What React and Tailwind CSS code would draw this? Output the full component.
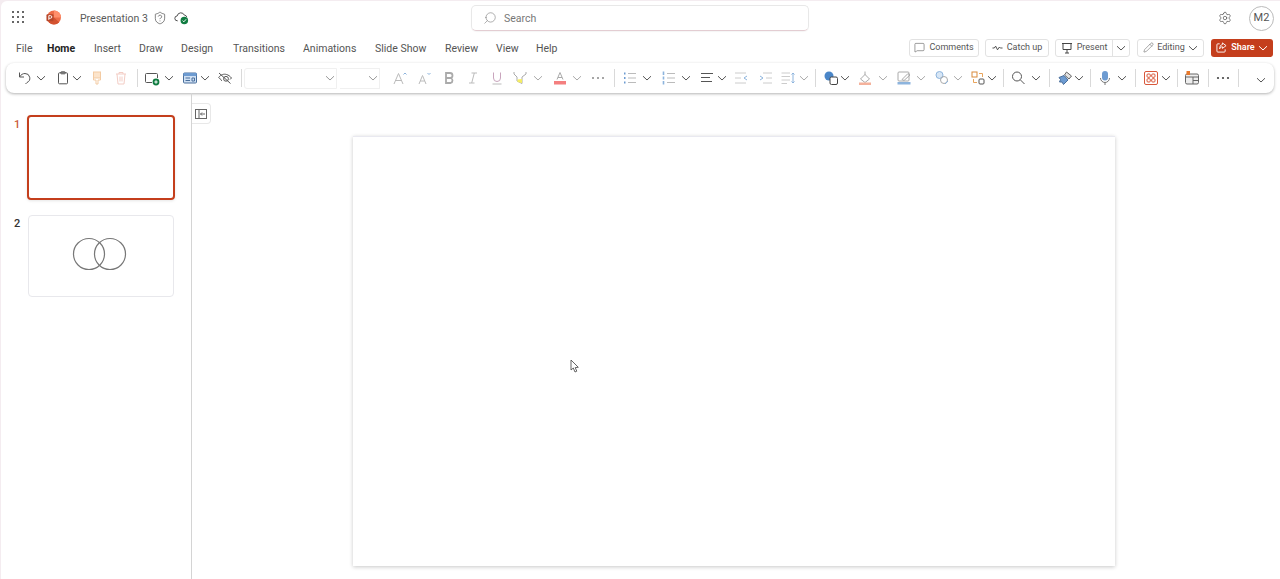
import React from 'react';
import { Settings, Search, MessageSquare, Pencil, ShieldQuestion } from 'lucide-react';

const tabs = [
  { name: 'File', cls: 'w-[31px]' },
  { name: 'Home', cls: 'w-[47px] font-bold text-[#242424]' },
  { name: 'Insert', cls: 'w-[45px]' },
  { name: 'Draw', cls: 'w-[42px]' },
  { name: 'Design', cls: 'w-[52px]' },
  { name: 'Transitions', cls: 'w-[70px]' },
  { name: 'Animations', cls: 'w-[72px]' },
  { name: 'Slide Show', cls: 'w-[70px]' },
  { name: 'Review', cls: 'w-[51px]' },
  { name: 'View', cls: 'w-[40px]' },
  { name: 'Help', cls: 'w-[30px]' },
];

const Chev = ({ className = '', color = 'text-[#555]' }) => (
  <svg viewBox="0 0 10 10" className={`w-[10px] h-[10px] shrink-0 fill-none stroke-current ${color} ${className}`}>
    <path d="M1 3.2 L5 7 L9 3.2" strokeWidth="1" />
  </svg>
);

const Divider = ({ className = '' }) => <div className={`w-px h-[18px] bg-[#d9d9d9] shrink-0 ${className}`} />;

const Ico = ({ className = '', children }) => (
  <svg viewBox="0 0 16 16" className={`w-4 h-4 shrink-0 fill-none stroke-current ${className}`} strokeWidth="1">
    {children}
  </svg>
);

const GridDots = () => (
  <svg viewBox="0 0 12 12" className="w-[12px] h-[12px] fill-[#333]">
    {[1, 6, 11].map((y) =>
      [1, 6, 11].map((x) => <circle key={`${x}-${y}`} cx={x} cy={y} r="1" />)
    )}
  </svg>
);

const Logo = () => (
  <svg viewBox="0 0 16 16" className="w-[15px] h-[15px]">
    <circle cx="8.5" cy="8" r="7.5" fill="#ed6c47" />
    <path d="M8.5 0.5 A7.5 7.5 0 0 1 16 8 L8.5 8 Z" fill="#ff8f6b" />
    <path d="M1 8 A7.5 7.5 0 0 0 8.5 15.5 A7.5 7.5 0 0 0 14 13 L8.5 8 Z" fill="#d35230" />
    <rect x="0.5" y="4.5" width="7.5" height="7.5" rx="1" fill="#b7472a" />
    <path d="M3 10.5 V6 H4.8 A1.4 1.4 0 0 1 4.8 8.8 H3" stroke="#fff" strokeWidth="1" fill="none" />
  </svg>
);

const CloudCheck = () => (
  <svg viewBox="0 0 16 16" className="w-[15px] h-[15px] fill-none">
    <path d="M4 11.5 H3.6 A2.6 2.6 0 0 1 3.4 6.3 A4 4 0 0 1 11 5.4 A2.8 2.8 0 0 1 13.6 7.6" stroke="#444" strokeWidth="1" />
    <circle cx="11" cy="11.2" r="4" fill="#107c41" />
    <path d="M9.2 11.3 L10.5 12.6 L12.9 9.9" stroke="#fff" strokeWidth="1" />
  </svg>
);

const OutlineBtn = ({ className = '', children }) => (
  <div className={`h-[18px] flex items-center justify-center border border-[#e2e2e2] bg-white rounded-[3px] text-[9px] text-[#555] shrink-0 ${className}`}>
    {children}
  </div>
);

function Ribbon() {
  return (
    <div className="ml-[5px] mr-[6px] mt-[3px] h-[30px] flex items-center bg-white rounded-lg shadow-[0_1px_3px_rgba(0,0,0,0.3)]">
      <Ico className="ml-[10px] text-[#555]"><path d="M3.5 2.5 V7 H8 M3.5 7 C5 4.5 7 3.5 9 3.5 A4.7 4.7 0 0 1 11 12.5 L9.5 14" /></Ico>
      <Chev className="ml-[4px]" />
      <Ico className="ml-[9px] text-[#555]"><rect x="3.5" y="2.8" width="9" height="11" rx="1" /><rect x="5.8" y="1.8" width="4.4" height="2" rx="0.6" /></Ico>
      <Chev className="ml-px" />
      <Ico className="ml-[7px] text-[#f3cba3]"><rect x="4.5" y="2" width="7" height="6" fill="#fce4cb" /><path d="M4.5 8 V10 H7 V14 H9 V10 H11.5 V8" /></Ico>
      <Ico className="ml-[8px] text-[#f3cdc5]"><path d="M3 4 H13 M6 4 V2.5 H10 V4 M4 4 L5 14 H11 L12 4 M7 6.5 V11.5 M9 6.5 V11.5" /></Ico>
      <Divider className="ml-[8px]" />
      <Ico className="ml-[6px] text-[#555]"><path d="M8 12.5 H2.5 A1 1 0 0 1 1.5 11.5 V4.5 A1 1 0 0 1 2.5 3.5 H12.5 A1 1 0 0 1 13.5 4.5 V8" /><circle cx="12" cy="12" r="3.4" fill="#107c41" stroke="none" /><path d="M10.3 12 H13.7 M12 10.3 V13.7" stroke="#fff" /></Ico>
      <Chev className="ml-[4px]" />
      <Ico className="ml-[8px] text-[#4a6f9c]"><rect x="1.5" y="3" width="13" height="10" rx="1" fill="#cfe0f3" /><rect x="1.5" y="3" width="13" height="3" fill="#6d9bd1" stroke="none" /><path d="M3.5 8 H8 M3.5 10.5 H8 M10 8 H12.5 V11 H10 Z" /></Ico>
      <Chev className="ml-[2px]" />
      <Ico className="ml-[7px] text-[#555]"><path d="M2 3 L13.5 13.5 M1.5 7.5 C4 4.5 7 3.7 9.5 4.5 C11.5 5 13 6.2 14.5 8 L13 9.5 M2 7.5 C3 9 4 10 5 10.8" /><circle cx="9" cy="8.8" r="2.4" /></Ico>
      <Divider className="ml-[8px]" />
      <div className="ml-[2px] w-[93px] h-[21px] flex items-center justify-end pr-[1px] border border-[#f0f0f0] rounded-l-[3px] shrink-0">
        <Chev color="text-[#999]" />
      </div>
      <div className="ml-[3px] w-[40px] h-[21px] flex items-center justify-end pr-[1px] border-r border-y border-[#f0f0f0] shrink-0">
        <Chev color="text-[#999]" />
      </div>
      <Ico className="ml-[12px] text-[#bbb]"><path d="M2 14 L6.5 3.5 L11 14 M3.6 10.5 H9.4" /><path d="M11.5 4.5 L13 3 L14.5 4.5" stroke="#8db4dd" /></Ico>
      <Ico className="ml-[8px] text-[#bbb]"><path d="M3 14 L6.5 5.5 L10 14 M4.2 11 H8.8" /><path d="M11.5 3 L13 4.5 L14.5 3" stroke="#8db4dd" /></Ico>
      <Ico className="ml-[9px] text-[#aaa]"><path strokeWidth="1.8" d="M5 3 H9 A2.4 2.4 0 0 1 9 8 H5 Z M5 8 H9.6 A2.6 2.6 0 0 1 9.6 13 H5 Z" /></Ico>
      <Ico className="ml-[8px] text-[#bbb]"><path d="M6.5 3 H12 M4 13 H9.5 M9.3 3 L6.7 13" /></Ico>
      <Ico className="ml-[8px] text-[#bbb]"><path d="M4.5 2.5 V8 A3.5 3.5 0 0 0 11.5 8 V2.5" stroke="#c9a5bd" /><path d="M3.5 14 H12.5" /></Ico>
      <Ico className="ml-[7px] text-[#aaa]"><path d="M2 2 V4 L5 7 V11 L10 13.5 V7 L14 4 V2" /><path d="M5.5 9.5 L10 9 V13 L5.5 12 Z" fill="#f5ee63" stroke="none" /></Ico>
      <Chev className="ml-[5px]" color="text-[#aaa]" />
      <Ico className="ml-[9px] text-[#aaa]"><path d="M5 9.5 L8 2.5 L11 9.5 M6 7.5 H10" /><rect x="2" y="11" width="12" height="3.5" fill="#f47f7f" stroke="none" /></Ico>
      <Chev className="ml-[4px]" color="text-[#aaa]" />
      <Ico className="ml-[8px] text-[#888]"><circle cx="3" cy="8" r="1" fill="#888" stroke="none" /><circle cx="8" cy="8" r="1" fill="#888" stroke="none" /><circle cx="13" cy="8" r="1" fill="#888" stroke="none" /></Ico>
      <Divider className="ml-[8px]" />
      <Ico className="ml-[7px] text-[#bbb]"><path d="M6 3.5 H14 M6 8 H14 M6 12.5 H14" /><path d="M2 3.5 H3.5 M2 8 H3.5 M2 12.5 H3.5" stroke="#6d9bd1" strokeWidth="2" /></Ico>
      <Chev className="ml-[4px]" />
      <Ico className="ml-[9px] text-[#bbb]"><path d="M6 3.5 H14 M6 8 H14 M6 12.5 H14" /><path d="M2.5 1.5 V5 M2.5 6.5 V9.5 M2.5 11 V14.5" stroke="#8db4dd" strokeWidth="1.6" /></Ico>
      <Chev className="ml-[4px]" />
      <Ico className="ml-[8px] text-[#555]"><path d="M2 3.5 H14 M2 7.5 H11 M2 11.5 H13" strokeWidth="1.2" /></Ico>
      <Chev className="ml-[2px]" />
      <Ico className="ml-[6px] text-[#ccc]"><path d="M2 3 H13 M2 13 H13 M2 8 H8" /><path d="M14 6 L11 8 L14 10" stroke="#8db4dd" /></Ico>
      <Ico className="ml-[9px] text-[#ccc]"><path d="M5 3 H14 M5 13 H14 M8 8 H14" /><path d="M2 6 L5 8 L2 10" stroke="#8db4dd" /></Ico>
      <Ico className="ml-[6px] text-[#ccc]"><path d="M1.5 3 H10 M1.5 6.5 H10 M1.5 10 H10 M1.5 13.5 H7" /><path d="M13 3 V13 M11.5 4.5 L13 3 L14.5 4.5 M11.5 11.5 L13 13 L14.5 11.5" stroke="#8db4dd" /></Ico>
      <Chev className="ml-[3px]" color="text-[#aaa]" />
      <Divider className="ml-[6px]" />
      <Ico className="ml-[7px] text-[#444]"><circle cx="6" cy="6" r="4.5" fill="#4a86c8" stroke="none" /><rect x="7" y="7" width="7.5" height="7.5" rx="1.5" fill="#fff" /></Ico>
      <Chev className="ml-px" />
      <Ico className="ml-[7px] text-[#aaa]"><path d="M8 1.5 V5 M3.5 9 L8 4.5 L12.5 9 L8 12.5 Z" /><rect x="2" y="12.5" width="12" height="2.5" fill="#f4b29c" stroke="none" /></Ico>
      <Chev className="ml-[5px]" color="text-[#aaa]" />
      <Ico className="ml-[8px] text-[#aaa]"><rect x="2" y="2" width="11" height="9" rx="1" /><path d="M6 9.5 L12 3.5 L14 5 L8 10.5 Z" /><rect x="1.5" y="12" width="13" height="2.5" fill="#8db4dd" stroke="none" /></Ico>
      <Chev className="ml-[4px]" color="text-[#aaa]" />
      <Ico className="ml-[8px] text-[#aaa]"><circle cx="5.5" cy="5" r="3.5" stroke="#8db4dd" fill="#d7e6f5" /><circle cx="10" cy="10" r="3.5" /><path d="M11 14 L14 11" stroke="#8db4dd" /></Ico>
      <Chev className="ml-[3px]" color="text-[#aaa]" />
      <Ico className="ml-[7px] text-[#555]"><rect x="2" y="2" width="5" height="5" stroke="#d98a3a" /><rect x="9" y="9" width="5" height="5" rx="1" /><path d="M9 3.5 H12.5 V7 M7 12.5 H3.5 V9" stroke="#e8a45c" /></Ico>
      <Chev className="ml-px" />
      <Divider className="ml-[6px]" />
      <Ico className="ml-[6px] text-[#555]"><circle cx="7" cy="6.5" r="4.5" /><path d="M10.3 9.8 L14.5 14" /></Ico>
      <Chev className="ml-[5px]" />
      <Divider className="ml-[8px]" />
      <Ico className="ml-[7px] text-[#4a6f9c]"><path d="M9.5 2 L14.5 6 L12 9 L7.5 5 Z" fill="#e4e4e4" stroke="#666" /><path d="M7 5.5 L2 7.5 L3.5 9.5 L2.5 12 L5 12 L6.5 14.5 L11 10 Z" fill="#6d9bd1" /></Ico>
      <Chev className="ml-px" />
      <Divider className="ml-[6px]" />
      <Ico className="ml-[6px] text-[#777]"><rect x="5" y="1" width="6" height="9.5" rx="3" fill="#6d9bd1" stroke="none" /><path d="M3.5 8 A4.5 4.5 0 0 0 12.5 8 M8 12.5 V15" /></Ico>
      <Chev className="ml-[4px]" />
      <Divider className="ml-[8px]" />
      <Ico className="ml-[7px] text-[#d9583b]"><rect x="1.5" y="1.5" width="13" height="13" rx="1.5" /><rect x="4" y="4" width="3.3" height="3.3" rx="1" /><rect x="8.7" y="4" width="3.3" height="3.3" rx="1" /><rect x="4" y="8.7" width="3.3" height="3.3" rx="1" /><rect x="8.7" y="8.7" width="3.3" height="3.3" rx="1" /></Ico>
      <Chev className="ml-[2px]" />
      <Divider className="ml-[6px]" />
      <Ico className="ml-[6px] text-[#666]"><rect x="1.5" y="4" width="13" height="10" rx="1.5" fill="#eee" /><path d="M1.5 7 H14.5 M9 7 V14 M9 10.5 H14.5" /><rect x="2.5" y="1" width="3.5" height="4" fill="#e8792b" stroke="none" /></Ico>
      <Divider className="ml-[8px]" />
      <Ico className="ml-[6px]"><circle cx="3" cy="8" r="1.1" fill="#444" stroke="none" /><circle cx="8" cy="8" r="1.1" fill="#444" stroke="none" /><circle cx="13" cy="8" r="1.1" fill="#444" stroke="none" /></Ico>
      <Divider className="ml-[7px]" />
      <Chev className="ml-[17px] mt-[4px]" />
    </div>
  );
}

export default function App() {
  return (
    <div className="h-screen w-full overflow-hidden bg-[#f4ecf0] pl-px pt-px font-['Roboto',sans-serif] text-[10.5px] text-[#555]">
      <div className="h-full bg-white rounded-tl-md flex flex-col">
        {/* title bar */}
        <div className="h-[34px] flex items-center shrink-0">
          <div className="ml-[11px] -mt-[2px]"><GridDots /></div>
          <div className="ml-[22px] -mt-px"><Logo /></div>
          <span className="ml-[19px] w-[70px] whitespace-nowrap text-[#5b5b5b] mt-px">Presentation 3</span>
          <ShieldQuestion className="ml-[3px] w-[14px] h-[14px] text-[#555] -mt-px" strokeWidth={1.25} />
          <div className="ml-[7px] -mt-px"><CloudCheck /></div>
          <div className="ml-[282px] w-[338px] h-[26px] flex items-center border border-[#e8e8e8] border-b-[#e3cdd2] rounded-[5px] shadow-[0_1px_1px_rgba(0,0,0,0.04)]">
            <Search className="ml-[11px] w-[14px] h-[14px] -scale-x-100 text-[#777]" strokeWidth={1} />
            <span className="ml-[7px] mt-px text-[#777]">Search</span>
          </div>
          <Settings className="ml-auto w-[14px] h-[14px] text-[#555] -mt-px" strokeWidth={1.25} />
          <div className="ml-[17px] mr-[6px] w-[25px] h-[25px] rounded-full border border-[#bbb] flex items-center justify-center text-[11px] text-[#555]">M2</div>
        </div>

        {/* tabs and right-side buttons */}
        <div className="h-[25px] flex items-center shrink-0">
          <div className="ml-[15px] pt-[2px] flex items-center">
            {tabs.map((t) => (
              <span key={t.name} className={`shrink-0 ${t.cls}`}>{t.name}</span>
            ))}
          </div>
          <div className="ml-auto mr-[7px] flex items-center">
            <OutlineBtn className="w-[70px]">
              <MessageSquare className="w-[11px] h-[11px] mr-[4px]" strokeWidth={1.25} />Comments
            </OutlineBtn>
            <OutlineBtn className="ml-[6px] w-[64px]">
              <svg viewBox="0 0 12 8" className="w-[11px] h-[8px] mr-[4px] fill-none stroke-[#444]"><path d="M0.5 4 H2.5 L4 2 L6 6 L8 3 L9 4 H11.5" /></svg>
              Catch up
            </OutlineBtn>
            <div className="ml-[6px] flex h-[18px] border border-[#e2e2e2] rounded-[3px] text-[9px] shrink-0">
              <div className="w-[57px] flex items-center justify-center border-r border-[#e2e2e2]">
                <svg viewBox="0 0 12 12" className="w-[12px] h-[12px] mr-[4px] fill-none stroke-[#444]"><path d="M1 1.5 H11 M2 1.5 V7.5 H10 V1.5 M6 7.5 V11 M4 11 H8" /></svg>
                Present
              </div>
              <div className="w-[16px] flex items-center justify-center"><Chev /></div>
            </div>
            <OutlineBtn className="ml-[7px] w-[67px]">
              <Pencil className="w-[11px] h-[11px] mr-[3px]" strokeWidth={1.1} />Editing
              <Chev className="ml-[3px]" />
            </OutlineBtn>
            <div className="ml-[7px] w-[62px] h-[18px] rounded-[3px] bg-[#c43e1c] text-white text-[9px] font-semibold flex items-center justify-center shrink-0">
              <svg viewBox="0 0 12 12" className="w-[11px] h-[11px] mr-[4px] fill-none stroke-white"><path d="M4 2 H2 A1 1 0 0 0 1 3 V10 A1 1 0 0 0 2 11 H9 A1 1 0 0 0 10 10 V8 M7 1 L11 4 L7 7 V5.2 C5.5 5.2 4.5 6 4 7.5 C4 5 5 3 7 2.8 Z" /></svg>
              Share
              <svg viewBox="0 0 10 10" className="w-[10px] h-[10px] ml-[3px] fill-none stroke-white"><path d="M1 3.2 L5 7 L9 3.2" /></svg>
            </div>
          </div>
        </div>

        <Ribbon />

        {/* body */}
        <div className="flex-1 flex min-h-0">
          <div className="w-[191px] shrink-0 border-r border-[#d4d4d4] relative pt-[22px]">
            <div className="flex">
              <span className="ml-[13px] w-[13px] mt-[2px] text-[#c9593a] font-medium text-[11px]">1</span>
              <div className="w-[148px] h-[85px] border-2 border-[#c43e1c] rounded-[4px] shadow-[0_1px_3px_rgba(0,0,0,0.1)]" />
            </div>
            <div className="flex mt-[15px]">
              <span className="ml-[13px] w-[14px] mt-px text-[#333] font-medium text-[11px]">2</span>
              <div className="w-[146px] h-[82px] border border-[#e8e8ec] rounded-[4px] flex items-center justify-center">
                <svg viewBox="0 0 56 34" className="w-[56px] h-[34px] mr-[4px] mb-[5px] fill-none stroke-[#777]">
                  <circle cx="18" cy="17" r="15.5" strokeWidth="1.2" />
                  <circle cx="39" cy="17" r="15.5" strokeWidth="1.2" />
                </svg>
              </div>
            </div>
            <div className="absolute top-[10px] -right-[20px] w-[19px] h-[21px] bg-white border-y border-r border-[#e8e8e8] rounded-r-[4px] flex items-center justify-center">
              <svg viewBox="0 0 12 10" className="w-[12px] h-[10px] fill-none stroke-[#666]"><rect x="0.5" y="0.5" width="11" height="9" /><path d="M4 0.5 V9.5 M10 5 H5.5 M7 3.5 L5.5 5 L7 6.5" /></svg>
            </div>
          </div>
          <div className="flex-1 pl-[161px] pt-[43px]">
            <div className="w-[762px] h-[430px] bg-white border-t border-[#e9e9f0] shadow-[0_1px_4px_rgba(0,0,0,0.22)] relative">
              <svg viewBox="0 0 10 14" className="absolute left-[217px] top-[222px] w-[10px] h-[14px] fill-white stroke-[#555]" strokeWidth="0.9">
                <path d="M1 1 V11 L3.3 9 L5 13 L6.8 12.2 L5.2 8.6 L8.3 8.3 Z" />
              </svg>
            </div>
          </div>
        </div>
      </div>
    </div>
  );
}
